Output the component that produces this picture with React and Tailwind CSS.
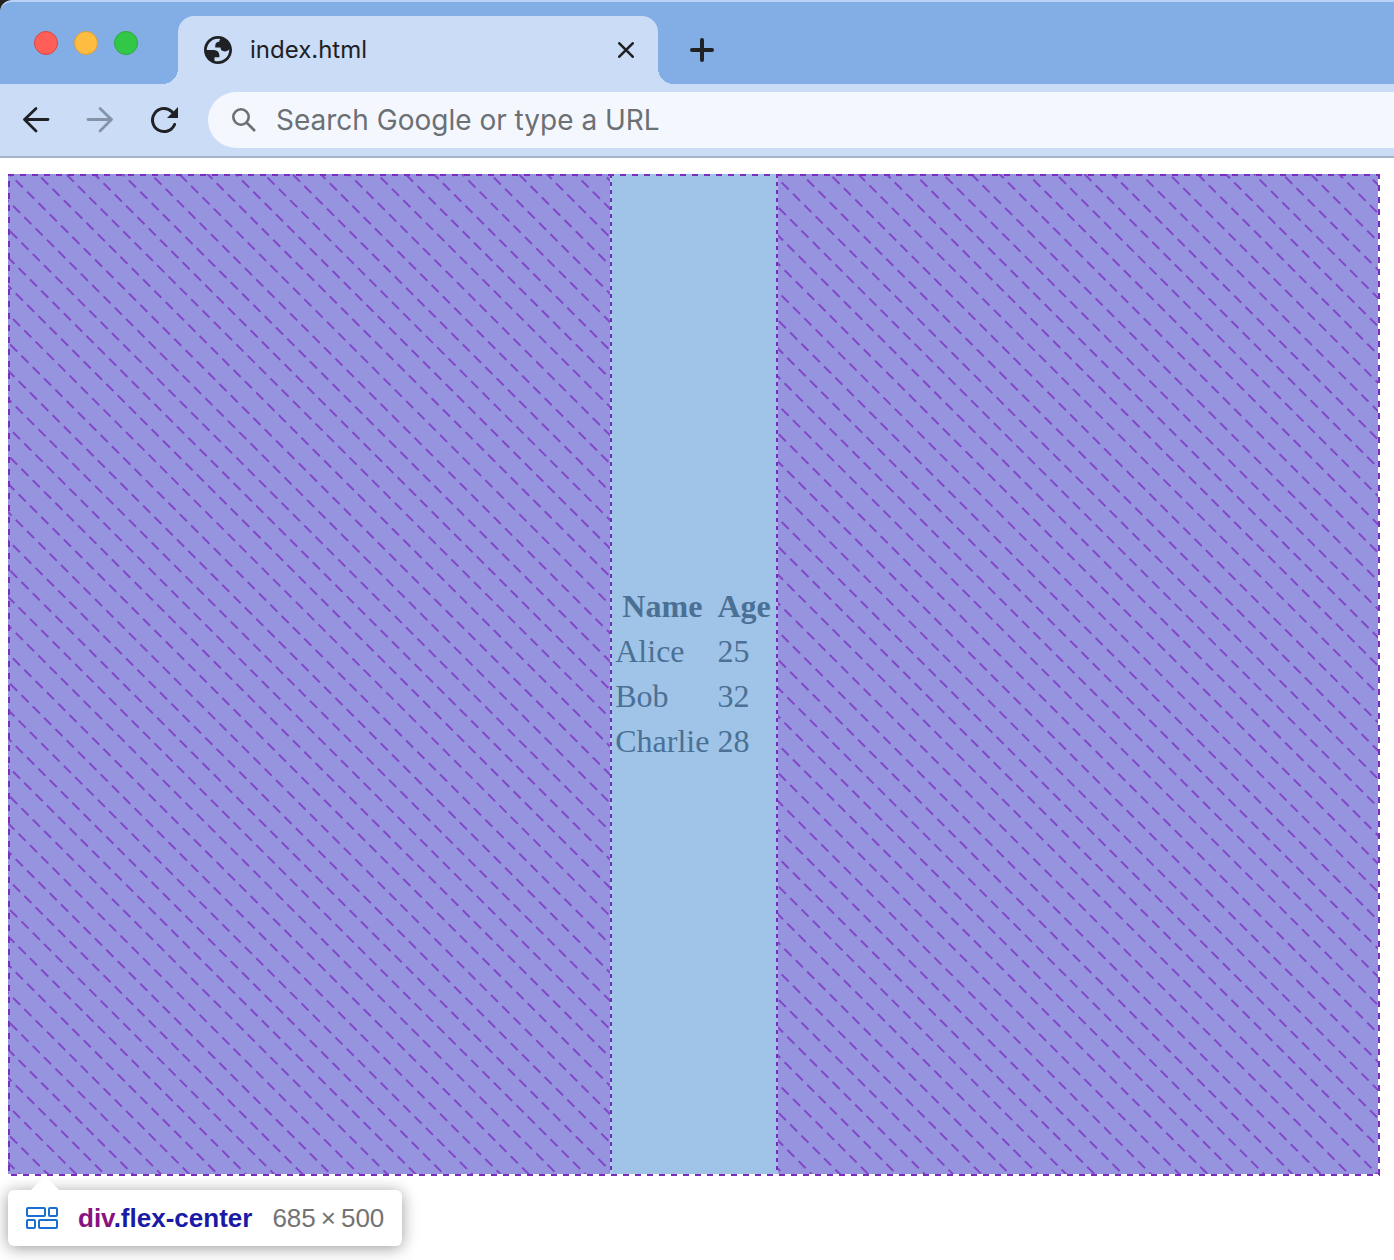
const people = [
	{ name: "Alice", age: 25 },
	{ name: "Bob", age: 32 },
	{ name: "Charlie", age: 28 },
];

// DevTools style hatching for the free space of a flex container
const Hatch = ({ id, shift }) => (
	<svg className="block w-full h-full" aria-hidden="true">
		<defs>
			<pattern
				id={id}
				width="16"
				height="20"
				patternUnits="userSpaceOnUse"
				patternTransform={`rotate(45) translate(10 ${shift})`}>
				<path d="M0 10H10" stroke="#8246c8" strokeWidth="2" />
			</pattern>
		</defs>
		<rect width="100%" height="100%" fill={`url(#${id})`} />
	</svg>
);

const TabBar = () => (
	<div className="flex h-[84px] bg-[#83ade5] border-t-2 border-[#b9d2f5] rounded-tl-xl">
		<div className="flex items-start gap-4 w-[178px] pt-[29px] pl-[34px]">
			<button
				aria-label="Close window"
				className="size-6 rounded-full bg-[#ff5f57] border border-[#d9474a]"
			/>
			<button
				aria-label="Minimize window"
				className="size-6 rounded-full bg-[#febc40] border border-[#dba03c]"
			/>
			<button
				aria-label="Zoom window"
				className="size-6 rounded-full bg-[#33c748] border border-[#2bab3c]"
			/>
		</div>
		<div className="relative flex items-center mt-3.5 w-[480px] pl-[26px] pr-5 bg-[#cbdcf6] rounded-t-2xl text-[#202124]">
			{/* Curved feet of the tab */}
			<span className="absolute bottom-0 -left-4 size-4 bg-[radial-gradient(circle_at_0_0,transparent_16px,#cbdcf6_16px)]" />
			<span className="absolute bottom-0 -right-4 size-4 bg-[radial-gradient(circle_at_100%_0,transparent_16px,#cbdcf6_16px)]" />
			<svg viewBox="2 2 20 20" className="size-7 mr-[18px]" fill="currentColor">
				<path
					fillRule="evenodd"
					d="M12 2C6.480 2 2 6.480 2 12s4.480 10 10 10 10-4.480 10-10S17.520 2 12 2zM4 12h4.400c3.407.022 4.922 1.730 4.543 5.127H9.488v2.470a8.004 8.004 0 0 0 10.498-8.080C19.327 12.507 18.332 13 17 13c-2.137 0-3.206-.916-3.206-2.750h-3.748c-.274-2.728.683-4.092 2.870-4.092 0-.975.327-1.597.811-1.970A8.004 8.004 0 0 0 4 12z"
				/>
			</svg>
			<span className="flex-1 text-2xl">index.html</span>
			<button aria-label="Close tab" className="p-1">
				<svg
					viewBox="0 0 16 16"
					className="size-4"
					stroke="currentColor"
					strokeWidth="2.6"
					strokeLinecap="round">
					<path d="M1.300 1.300l13.400 13.400M14.700 1.300L1.300 14.700" />
				</svg>
			</button>
		</div>
		<button aria-label="New tab" className="self-center mt-3.5 ml-8 text-[#202124]">
			<svg
				viewBox="0 0 24 24"
				className="size-6"
				stroke="currentColor"
				strokeWidth="4"
				strokeLinecap="round">
				<path d="M12 2v20M2 12h20" />
			</svg>
		</button>
	</div>
);

const Toolbar = () => (
	<div className="flex items-center h-[74px] pl-[22px] bg-[#cbdcf6] border-b-2 border-[#a5b3cd] text-[#202124]">
		<button aria-label="Back" className="w-7 mr-9">
			<svg
				viewBox="0 0 28 28"
				className="size-7"
				fill="none"
				stroke="currentColor"
				strokeWidth="2.8"
				strokeLinecap="round"
				strokeLinejoin="round">
				<path d="M26 13.500H2.500M14 2.500L2.500 13.500 14 25" />
			</svg>
		</button>
		<button aria-label="Forward" className="w-7 mr-9 text-[#8692a6]">
			<svg
				viewBox="0 0 28 28"
				className="size-7"
				fill="none"
				stroke="currentColor"
				strokeWidth="2.8"
				strokeLinecap="round"
				strokeLinejoin="round">
				<path d="M2 13.500h23.500M14 2.500L25.500 13.500 14 25" />
			</svg>
		</button>
		<button aria-label="Reload" className="w-7 mr-[30px]">
			<svg viewBox="0 0 28 28" className="size-7" fill="none">
				<path
					d="M22.100 5.900A11.500 11.500 0 1 0 24.600 18.500"
					stroke="currentColor"
					strokeWidth="3"
					strokeLinecap="round"
				/>
				<path d="M28 1v11H17z" fill="currentColor" />
			</svg>
		</button>
		<label className="flex flex-1 items-center h-14 pl-6 bg-[#f4f8fe] rounded-l-full text-[#6c6f74]">
			<svg
				viewBox="0 0 24 24"
				className="size-6 mr-5"
				fill="none"
				stroke="currentColor"
				strokeWidth="2.6">
				<circle cx="9" cy="9" r="7.700" />
				<path d="M14.500 14.500l8.500 8.500" />
			</svg>
			<input
				type="text"
				aria-label="Address"
				placeholder="Search Google or type a URL"
				className="flex-1 text-[28px] outline-none placeholder:text-[#6c6f74]"
			/>
		</label>
	</div>
);

const PeopleTable = () => (
	<table className="border-separate border-spacing-1 font-['Liberation_Serif',serif] text-[32px] leading-[37px] text-[#4b7095]">
		<thead>
			<tr>
				<th className="p-0.5 font-bold">Name</th>
				<th className="p-0.5 font-bold">Age</th>
			</tr>
		</thead>
		<tbody>
			{people.map((person) => (
				<tr key={person.name}>
					<td className="p-0.5">{person.name}</td>
					<td className="p-0.5">{person.age}</td>
				</tr>
			))}
		</tbody>
	</table>
);

const FlexOverlay = () => (
	<div className="relative mt-4 ml-2 mr-3.5 pr-0.5 pb-0.5">
		<div className="flex h-[1000px]">
			<div className="flex-1 bg-[#9694df]">
				<Hatch id="hatch-left" shift={-11} />
			</div>
			<div className="relative flex items-center justify-center w-[166px] bg-[#a0c4e7]">
				<PeopleTable />
				{/* Item edges */}
				<span className="absolute inset-y-0 left-0 w-0.5 bg-[repeating-linear-gradient(180deg,#702fb8_0_4px,#b9c8f0_4px_8px)]" />
				<span className="absolute inset-y-0 left-full w-0.5 z-10 bg-[repeating-linear-gradient(180deg,#702fb8_0_4px,#b5b4ec_4px_8px)]" />
			</div>
			<div className="flex-1 bg-[#9694df]">
				<Hatch id="hatch-right" shift={-8} />
			</div>
		</div>
		{/* Container edges */}
		<span className="absolute inset-x-0 top-0 h-0.5 z-10 bg-[repeating-linear-gradient(90deg,#7a2dbb_0_6px,transparent_6px_12px)]" />
		<span className="absolute inset-x-0 bottom-0 h-0.5 bg-[repeating-linear-gradient(90deg,transparent_0_3px,#7a2dbb_3px_9px,transparent_9px_12px)]" />
		<span className="absolute inset-y-0 left-0 w-0.5 bg-[repeating-linear-gradient(180deg,#7a2dbb_0_1px,transparent_1px_7px,#7a2dbb_7px_12px)]" />
		<span className="absolute inset-y-0 right-0 w-0.5 bg-[repeating-linear-gradient(180deg,#7a2dbb_0_5px,transparent_5px_11px,#7a2dbb_11px_12px)]" />
	</div>
);

const Tooltip = () => (
	<div className="relative flex items-center gap-5 w-fit h-14 mt-3.5 ml-2 px-[18px] bg-white rounded-md text-[26px] font-['Liberation_Sans',sans-serif] shadow-[0_2px_16px_rgba(0,0,0,0.4)]">
		<svg
			viewBox="0 0 28 14"
			className="absolute -top-3.5 left-[23px] w-7 h-3.5"
			aria-hidden="true">
			<path d="M14 0l14 14H0z" fill="#fff" />
		</svg>
		<svg
			viewBox="0 0 32 22"
			className="w-8 h-[22px]"
			fill="none"
			stroke="#1a6fd0"
			strokeWidth="2">
			<rect x="1" y="1" width="18" height="8" rx="1" />
			<rect x="23" y="1" width="8" height="8" rx="1" />
			<rect x="1" y="13" width="8" height="8" rx="1" />
			<rect x="13" y="13" width="18" height="8" rx="1" />
		</svg>
		<span className="font-bold text-[#1a1aa6]">
			<span className="text-[#881280]">div</span>.flex-center
		</span>
		<span className="text-[#737373]">
			685<span className="px-[5px]">×</span>500
		</span>
	</div>
);

const App = () => {
	return (
		<div className="min-h-screen pb-3.5 bg-white font-['Inter',sans-serif]">
			<div className="bg-[#222]">
				<TabBar />
			</div>
			<Toolbar />
			<FlexOverlay />
			<Tooltip />
		</div>
	);
};

export default App;
